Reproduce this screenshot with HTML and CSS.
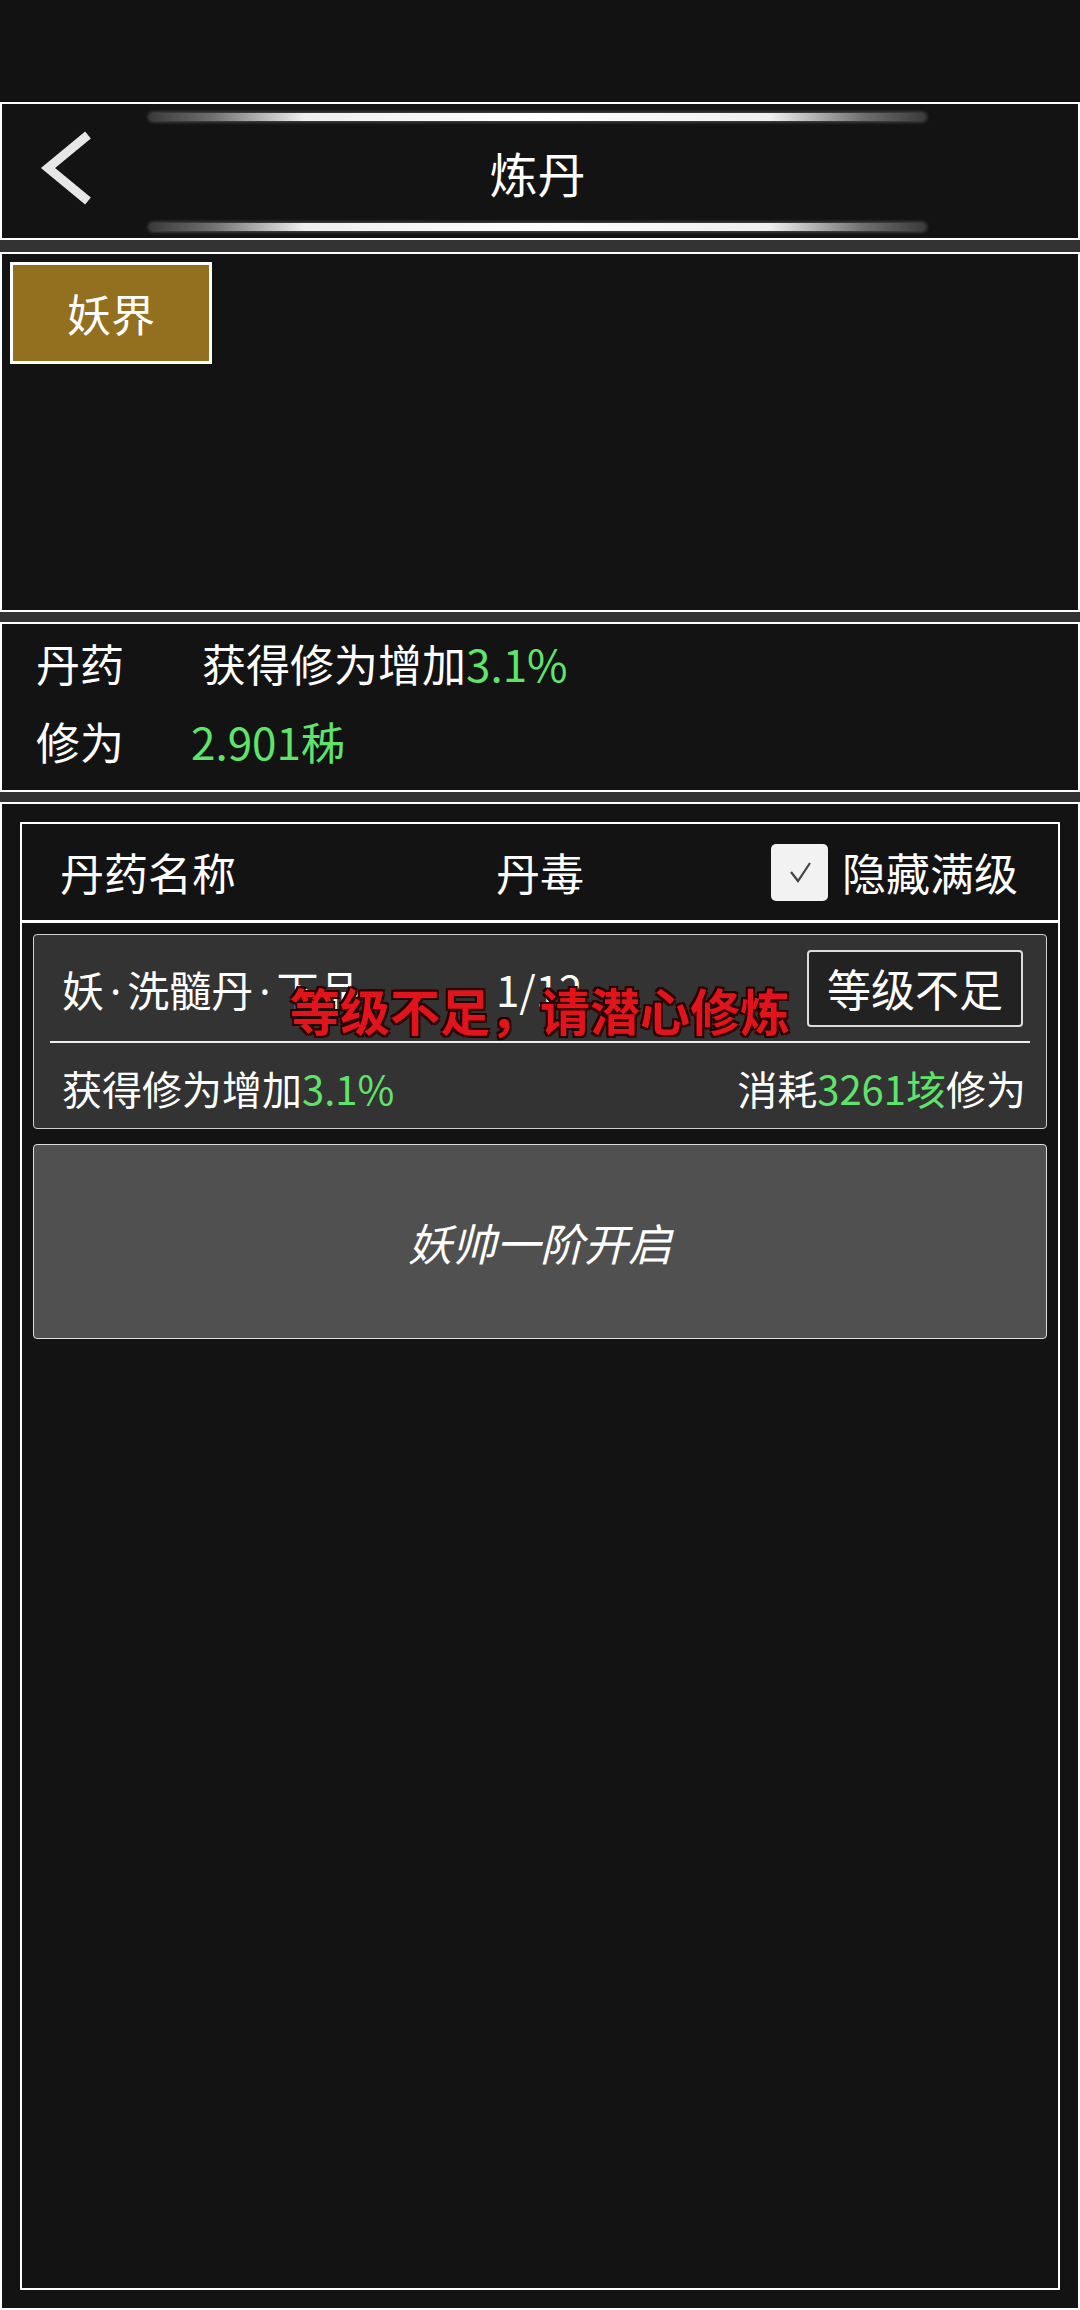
FILE: index.html
```html
<!DOCTYPE html>
<html lang="zh">
<head>
    <meta charset="UTF-8">
    <meta name="viewport" content="width=device-width, initial-scale=1.0">
    <title>炼丹</title>
    <link rel="stylesheet" href="styles.css">
</head>
<body>
    <!-- 状态栏 -->
    <div class="status-bar"></div>

    <div class="page">
        <!-- 标题栏 -->
        <header class="panel top-bar">
            <div class="back-col">
                <svg class="back-icon" width="56" height="80" viewBox="0 0 56 80">
                    <path d="M50 4 L10 37 L50 70" fill="none" stroke="#e6e6e6" stroke-width="9"/>
                </svg>
            </div>
            <div class="title-col">
                <div class="glow-line"></div>
                <h1 class="title">炼丹</h1>
                <div class="glow-line"></div>
            </div>
            <div></div>
        </header>

        <!-- 界别选择 -->
        <section class="panel tab-panel">
            <button class="tab-btn">妖界</button>
        </section>

        <!-- 当前信息 -->
        <section class="panel info-panel">
            <div class="info-row">
                <span class="info-label">丹药</span>
                <span class="info-value gap-wide">获得修为增加<em class="green">3.1%</em></span>
            </div>
            <div class="info-row">
                <span class="info-label">修为</span>
                <span class="info-value gap-narrow green">2.901秭</span>
            </div>
        </section>

        <!-- 丹药列表 -->
        <section class="panel list-panel">
            <div class="list-box">
                <div class="list-head">
                    <span class="col-name">丹药名称</span>
                    <span class="col-poison">丹毒</span>
                    <label class="hide-max">
                        <span class="checkbox">
                            <svg width="34" height="34" viewBox="0 0 34 34">
                                <polyline points="8,17 15,26 27,8" fill="none" stroke="#444" stroke-width="2.2"/>
                            </svg>
                        </span>
                        隐藏满级
                    </label>
                </div>

                <div class="list-body">
                    <div class="pill-card">
                        <div class="card-top">
                            <span class="col-name">妖<span class="dot">·</span>洗髓丹<span class="dot">·</span>下品</span>
                            <span class="col-count">1/12</span>
                            <button class="level-btn">等级不足</button>
                        </div>
                        <div class="card-line"></div>
                        <div class="card-bottom">
                            <span>获得修为增加<em class="green">3.1%</em></span>
                            <span>消耗<em class="green">3261垓</em>修为</span>
                        </div>
                        <div class="toast">等级不足，请潜心修炼</div>
                    </div>

                    <div class="locked-card">妖帅一阶开启</div>
                </div>
            </div>
        </section>
    </div>
</body>
</html>
```

FILE: styles.css
```css
* {
    margin: 0;
    padding: 0;
    box-sizing: border-box;
}

body {
    width: 1080px;
    height: 2310px;
    overflow: hidden;
    background-color: #333333;
    color: #ffffff;
    font-family: "Noto Sans CJK SC", "Noto Sans", sans-serif;
}

em {
    font-style: normal;
}

.green {
    color: #5fe36b;
}

.status-bar {
    height: 102px;
    background-color: #121212;
}

.page {
    display: flex;
    flex-direction: column;
    gap: 10px;
}

.panel {
    border: 2px solid #ffffff;
    background-color: #131313;
}

/* 标题栏 */
.top-bar {
    height: 138px;
    margin-bottom: 2px;
    display: grid;
    grid-template-columns: 147px 777px 1fr;
}

.back-col {
    display: flex;
    align-items: center;
    padding-left: 36px;
}

.title-col {
    display: flex;
    flex-direction: column;
    padding-top: 9px;
}

.glow-line {
    height: 8px;
    border-radius: 4px;
    background: linear-gradient(to right, #3a3a3a 0%, #6e6e6e 8%, #eeeeee 20%, #ffffff 50%, #eeeeee 80%, #6e6e6e 92%, #3a3a3a 100%);
    box-shadow: 0 0 4px rgba(255, 255, 255, 0.4);
}

.title {
    height: 102px;
    line-height: 102px;
    text-align: center;
    font-size: 48px;
    font-weight: 400;
}

/* 界别 */
.tab-panel {
    height: 360px;
    padding: 8px;
}

.tab-btn {
    width: 202px;
    height: 102px;
    background-color: #936f20;
    border: 3px solid #ffffff;
    color: #ffffff;
    font-family: inherit;
    font-size: 44px;
}

/* 信息 */
.info-panel {
    height: 170px;
    padding-left: 34px;
    font-size: 44px;
}

.info-row {
    height: 78px;
    display: flex;
    align-items: center;
}

.info-label {
    width: 90px;
}

.gap-wide {
    margin-left: 76px;
}

.gap-narrow {
    margin-left: 65px;
}

/* 列表 */
.list-panel {
    height: 1508px;
    padding: 18px;
}

.list-box {
    height: 100%;
    border: 2px solid #ffffff;
}

.list-head {
    height: 99px;
    border-bottom: 3px solid #ffffff;
    display: flex;
    align-items: center;
    padding-left: 38px;
    font-size: 44px;
}

.list-head .col-name {
    width: 436px;
}

.col-poison {
    width: 275px;
}

.hide-max {
    display: flex;
    align-items: center;
    gap: 14px;
}

.checkbox {
    width: 57px;
    height: 57px;
    border-radius: 5px;
    background-color: #f2f2f2;
    display: flex;
    justify-content: center;
    align-items: center;
}

.list-body {
    padding: 11px;
    display: flex;
    flex-direction: column;
    gap: 15px;
}

.pill-card {
    position: relative;
    height: 195px;
    background-color: #333333;
    border: 1px solid #d0d0d0;
    border-radius: 4px;
}

.card-top {
    height: 106px;
    display: flex;
    align-items: center;
    padding: 0 23px 0 28px;
    font-size: 42px;
}

.card-top .col-name {
    width: 434px;
}

.dot {
    font-family: "Noto Sans", sans-serif;
    margin: 0 6px;
}

.level-btn {
    margin-left: auto;
    width: 216px;
    height: 77px;
    background-color: #222222;
    border: 2px solid #dddddd;
    border-radius: 4px;
    color: #ffffff;
    font-family: inherit;
    font-size: 44px;
}

.card-line {
    height: 2px;
    margin: 0 16px;
    background-color: #f0f0f0;
}

.card-bottom {
    height: 85px;
    display: flex;
    justify-content: space-between;
    align-items: center;
    padding: 4px 20px 0 28px;
    font-size: 40px;
}

.toast {
    position: absolute;
    left: 0;
    right: 0;
    top: 44px;
    text-align: center;
    font-size: 50px;
    font-weight: 700;
    line-height: 60px;
    color: #e0141a;
    text-shadow: -2px -2px 0 #2a0000, 2px -2px 0 #2a0000, -2px 2px 0 #2a0000, 2px 2px 0 #2a0000, 0 2px 0 #2a0000, 0 -2px 0 #2a0000;
}

.locked-card {
    height: 195px;
    background-color: #505050;
    border: 1px solid #dddddd;
    border-radius: 4px;
    display: flex;
    justify-content: center;
    align-items: center;
    font-size: 44px;
    font-style: italic;
}
```
